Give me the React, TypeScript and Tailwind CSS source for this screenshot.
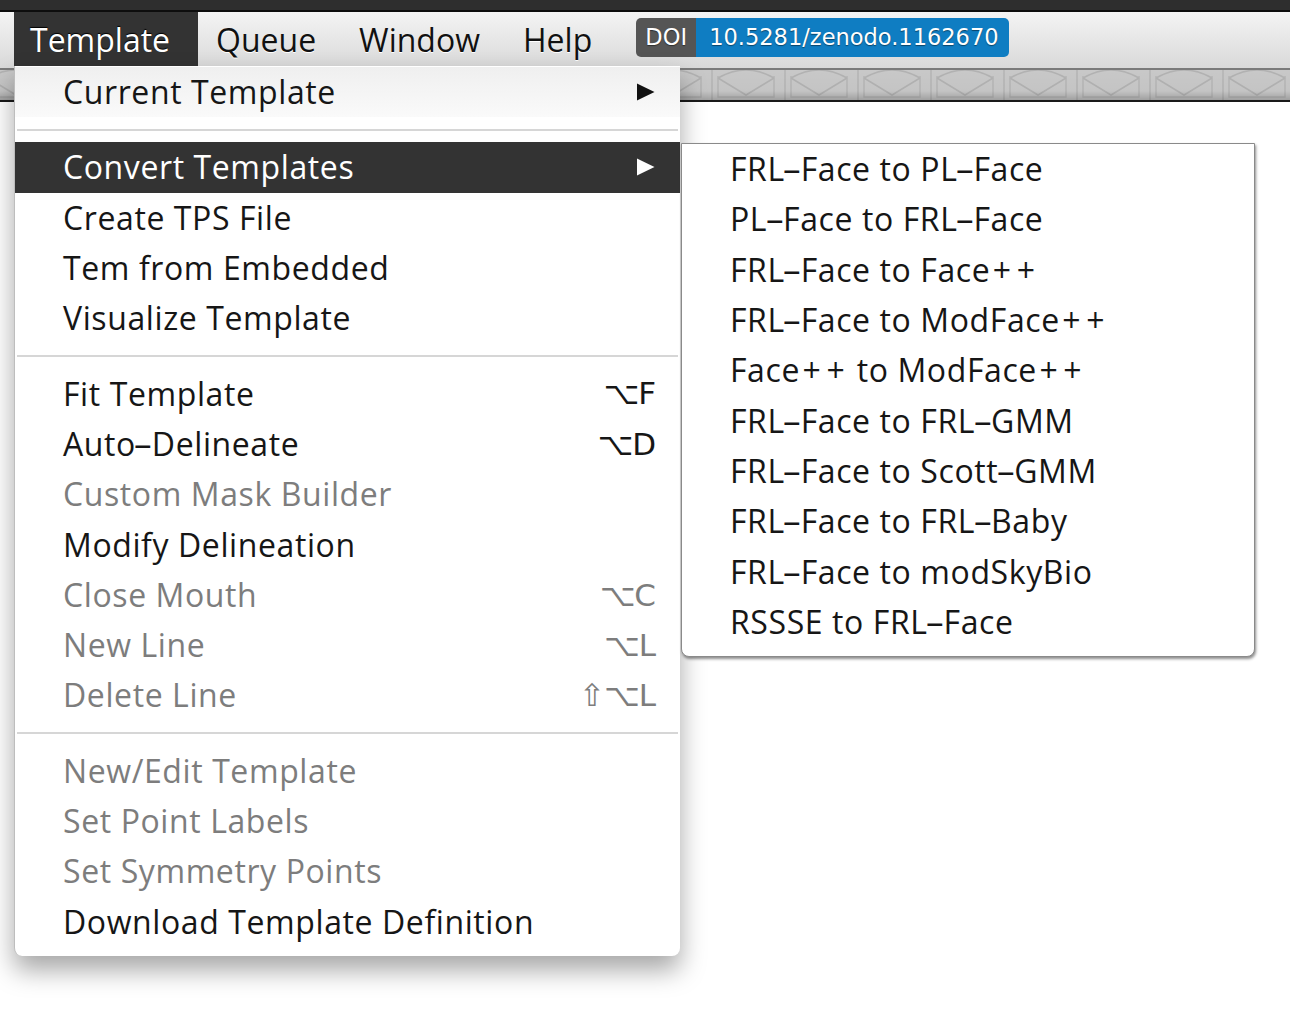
import React from "react";

type Item =
  | { kind: "sep" }
  | { kind: "item"; label: string; disabled?: boolean; active?: boolean; arrow?: boolean; shortcut?: string; tinted?: boolean };

const mainItems: Item[] = [
  { kind: "item", label: "Current Template", arrow: true, tinted: true },
  { kind: "sep" },
  { kind: "item", label: "Convert Templates", arrow: true, active: true },
  { kind: "item", label: "Create TPS File" },
  { kind: "item", label: "Tem from Embedded" },
  { kind: "item", label: "Visualize Template" },
  { kind: "sep" },
  { kind: "item", label: "Fit Template", shortcut: "⌥F" },
  { kind: "item", label: "Auto-Delineate", shortcut: "⌥D" },
  { kind: "item", label: "Custom Mask Builder", disabled: true },
  { kind: "item", label: "Modify Delineation" },
  { kind: "item", label: "Close Mouth", disabled: true, shortcut: "⌥C" },
  { kind: "item", label: "New Line", disabled: true, shortcut: "⌥L" },
  { kind: "item", label: "Delete Line", disabled: true, shortcut: "⇧⌥L" },
  { kind: "sep" },
  { kind: "item", label: "New/Edit Template", disabled: true },
  { kind: "item", label: "Set Point Labels", disabled: true },
  { kind: "item", label: "Set Symmetry Points", disabled: true },
  { kind: "item", label: "Download Template Definition" },
];

const subItems = [
  "FRL-Face to PL-Face",
  "PL-Face to FRL-Face",
  "FRL-Face to Face++",
  "FRL-Face to ModFace++",
  "Face++ to ModFace++",
  "FRL-Face to FRL-GMM",
  "FRL-Face to Scott-GMM",
  "FRL-Face to FRL-Baby",
  "FRL-Face to modSkyBio",
  "RSSSE to FRL-Face",
];

const FONT = "font-['Open_Sans',sans-serif]";

// Hyphens and plus signs are wider in the reference typeface.
function Label({ text }: { text: string }) {
  const parts = text.split(/([-+])/);
  return (
    <span className="tracking-[0.6px]">
      {parts.map((p, i) =>
        p === "-" ? (
          <span key={i} className="mx-[2.5px] inline-block scale-x-[1.9]">
            {p}
          </span>
        ) : p === "+" ? (
          <span key={i} className="mx-[2.5px] inline-block">
            {p}
          </span>
        ) : (
          <React.Fragment key={i}>{p}</React.Fragment>
        )
      )}
    </span>
  );
}

function Arrow({ white }: { white?: boolean }) {
  return (
    <svg width="19" height="18" viewBox="0 0 19 18" className="shrink-0">
      <path d="M1 0.5 L18.5 9 L1 17.5 Z" fill={white ? "#ffffff" : "#111111"} />
    </svg>
  );
}

function Pattern() {
  return (
    <svg className="absolute inset-0 h-full w-full" preserveAspectRatio="none">
      <defs>
        <pattern id="env" x="-20" y="0" width="73" height="30" patternUnits="userSpaceOnUse">
          <rect width="73" height="30" fill="#c8c8c8" />
          <path d="M2 0 L2 30" stroke="#b4b4b4" strokeWidth="1.5" />
          <path d="M8 8 Q36 -8 64 8" stroke="#b2b2b2" strokeWidth="1.5" fill="none" />
          <path d="M8 6 L8 27 L64 27 L64 6" stroke="#b6b6b6" strokeWidth="1.5" fill="none" />
          <path d="M8 8 L36 25 L64 8" stroke="#b2b2b2" strokeWidth="1.5" fill="none" />
        </pattern>
        <linearGradient id="shade" x1="0" y1="0" x2="0" y2="1">
          <stop offset="0" stopColor="#000" stopOpacity="0" />
          <stop offset="0.7" stopColor="#000" stopOpacity="0.02" />
          <stop offset="1" stopColor="#000" stopOpacity="0.2" />
        </linearGradient>
      </defs>
      <rect width="100%" height="100%" fill="url(#env)" />
      <rect width="100%" height="100%" fill="url(#shade)" />
    </svg>
  );
}

export default function App() {
  return (
    <div className={`relative h-[1036px] w-[1290px] overflow-hidden bg-white ${FONT}`}>
      {/* top dark strip */}
      <div className="h-[10px] bg-[#2e2e2e]" />
      <div className="h-[2px] bg-[#0d0d0d]" />
      {/* menu bar */}
      <div className="flex h-[56px] items-stretch bg-gradient-to-b from-[#f4f4f4] to-[#d9d9d9] pl-[14px] text-[32px]">
        <div className="flex items-center bg-[#333333] pl-[16px] pr-[28px] text-white [text-shadow:0_-1px_1px_#000]">
          Template
        </div>
        <div className="flex items-center pl-[18px] pr-[21px] text-[#111] [text-shadow:0_1px_0_#fff]">Queue</div>
        <div className="flex items-center pl-[22px] pr-[21px] text-[#111] [text-shadow:0_1px_0_#fff]">Window</div>
        <div className="flex items-center pl-[22px] text-[#111] [text-shadow:0_1px_0_#fff]">Help</div>
        <div className="ml-[44px] mt-[6px] flex h-[39px] overflow-hidden rounded-[5px] font-['DejaVu_Sans',sans-serif] text-[22.5px] text-white [text-shadow:0_1px_1px_rgba(0,0,0,0.45)]">
          <div className="flex w-[60px] items-center justify-center bg-[#555555]">DOI</div>
          <div className="flex items-center bg-[#0f7dc2] pl-[13px] pr-[10px]">10.5281/zenodo.1162670</div>
        </div>
      </div>
      {/* pattern strip */}
      <div className="h-[2px] bg-[#7a7a7a]" />
      <div className="relative h-[30px]">
        <Pattern />
      </div>
      <div className="h-[2px] bg-[#1a1a1a]" />

      {/* main dropdown */}
      <div className="absolute left-[14px] top-[66px] w-[666px] rounded-b-[8px] border-l border-[#bdbdbd] bg-white pb-[9px] pt-[1px] shadow-[0_14px_26px_rgba(0,0,0,0.35)]">
        {mainItems.map((it, i) =>
          it.kind === "sep" ? (
            <div key={i} className="flex h-[25px] items-center px-[2px]">
              <div className="h-[2px] w-full bg-[#d6d6d6]" />
            </div>
          ) : (
            <div
              key={i}
              className={`flex h-[50.3px] items-center justify-between pl-[48px] pr-[25px] text-[32px] ${
                it.active
                  ? "bg-[#333333] text-white"
                  : it.disabled
                  ? "text-[#7d7d7d]"
                  : "text-[#161616]"
              } ${it.tinted ? "bg-gradient-to-b from-[#efefef] to-[#fafafa]" : ""}`}
            >
              <Label text={it.label} />
              {it.arrow && <Arrow white={it.active} />}
              {it.shortcut && (
                <span className="font-['DejaVu_Sans',sans-serif] text-[31px] tracking-[-1px]">{it.shortcut}</span>
              )}
            </div>
          )
        )}
      </div>

      {/* submenu */}
      <div className="absolute left-[681px] top-[143px] w-[574px] rounded-b-[8px] border border-[#8a8a8a] bg-white pb-[9px] shadow-[1px_2px_3px_rgba(0,0,0,0.45)]">
        {subItems.map((s) => (
          <div key={s} className="flex h-[50.3px] items-center pl-[48px] text-[32px] text-[#161616]">
            <Label text={s} />
          </div>
        ))}
      </div>
    </div>
  );
}
